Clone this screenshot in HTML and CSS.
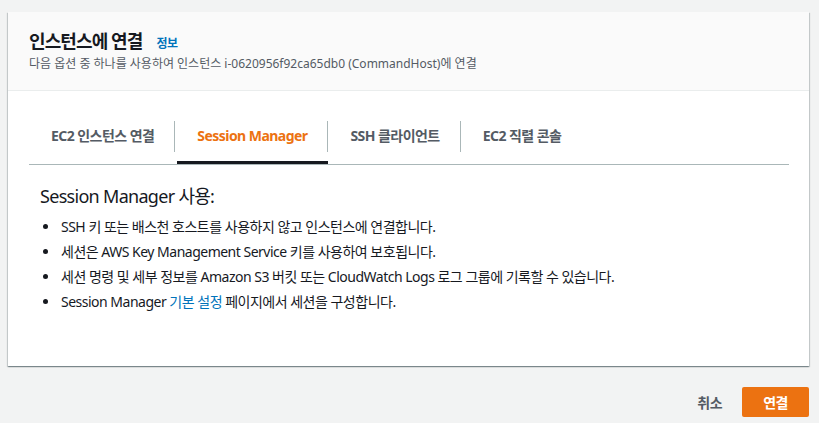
FILE: index.html
```html
<!DOCTYPE html>
<html lang="ko">
<head>
<meta charset="utf-8">
<title>인스턴스에 연결</title>
<link rel="stylesheet" href="styles.css">
</head>
<body>
<div class="page">
  <section class="card">
    <header class="card-header">
      <div class="title-row">
        <h1 class="title">인스턴스에 연결</h1>
        <a class="info-link" href="#">정보</a>
      </div>
      <p class="subtitle">다음 옵션 중 하나를 사용하여 인스턴스 i-0620956f92ca65db0 (CommandHost)에 연결</p>
    </header>
    <div class="card-body">
      <nav class="tabs">
        <div class="tab"><span class="tab-label">EC2 인스턴스 연결</span></div>
        <div class="tab active"><span class="tab-label">Session Manager</span></div>
        <div class="tab"><span class="tab-label">SSH 클라이언트</span></div>
        <div class="tab last"><span class="tab-label">EC2 직렬 콘솔</span></div>
      </nav>
      <div class="tab-content">
        <h2 class="content-title">Session Manager 사용:</h2>
        <ul class="bullets">
          <li>SSH 키 또는 배스천 호스트를 사용하지 않고 인스턴스에 연결합니다.</li>
          <li>세션은 AWS Key Management Service 키를 사용하여 보호됩니다.</li>
          <li>세션 명령 및 세부 정보를 Amazon S3 버킷 또는 CloudWatch Logs 로그 그룹에 기록할 수 있습니다.</li>
          <li>Session Manager <a class="link" href="#">기본 설정</a> 페이지에서 세션을 구성합니다.</li>
        </ul>
      </div>
    </div>
  </section>
  <footer class="actions">
    <button class="btn-link">취소</button>
    <button class="btn-primary">연결</button>
  </footer>
</div>
</body>
</html>
```
FILE: styles.css
```css
* { box-sizing: border-box; }
html, body { margin: 0; padding: 0; }
body {
  background: #f2f3f3;
  font-family: "Noto Sans", "Noto Sans CJK KR", sans-serif;
  color: #16191f;
  letter-spacing: -0.55px;
  width: 819px;
  height: 423px;
  overflow: hidden;
}
.page {
  padding: 12px 10px 0 8px;
}
.card {
  background: #fff;
  box-shadow: 0 1px 1px 0 rgba(0, 28, 36, 0.3), 1px 1px 1px 0 rgba(0, 28, 36, 0.15), -1px 1px 1px 0 rgba(0, 28, 36, 0.15);
}
.card-header {
  background: #fafafa;
  border-bottom: 1px solid #eaeded;
  padding: 17px 20px 0 21px;
  height: 79px;
}
.title-row {
  display: flex;
  align-items: baseline;
  gap: 14px;
}
.title {
  margin: 0;
  font-size: 18px;
  line-height: 24px;
  font-weight: 700;
  letter-spacing: -0.9px;
  color: #16191f;
}
.info-link {
  font-size: 12px;
  font-weight: 700;
  color: #0073bb;
  text-decoration: none;
}
.subtitle {
  margin: 3px 0 0;
  font-size: 12px;
  line-height: 16px;
  letter-spacing: 0;
  color: #545b64;
}
.card-body {
  padding: 20px 20px 0 21px;
  height: 275px;
}
.tabs {
  display: flex;
  border-bottom: 1px solid #aab7b8;
  height: 54px;
}
.tab {
  position: relative;
  display: flex;
  align-items: center;
  padding: 0 21px 0 22px;
  font-size: 14px;
  font-weight: 700;
  color: #545b64;
}
.tab::after {
  content: "";
  position: absolute;
  right: 0;
  top: 10px;
  bottom: 12px;
  width: 1px;
  background: #aab7b8;
}
.tab.last::after { display: none; }
.tab.active {
  color: #ec7211;
}
.tab.active::before {
  content: "";
  position: absolute;
  left: 2px;
  right: 0;
  bottom: 0;
  height: 3px;
  background: #16191f;
}
.tab-label {
  display: block;
  line-height: 20px;
  margin-top: -4px;
}
.tab-content {
  padding: 19px 11px 0 11px;
}
.content-title {
  margin: 0 0 6px;
  font-size: 18px;
  line-height: 24px;
  font-weight: 400;
  letter-spacing: -0.7px;
  color: #16191f;
}
.bullets {
  margin: 0;
  padding: 0 0 0 20px;
  font-size: 14px;
  line-height: 25px;
  letter-spacing: -0.5px;
  color: #16191f;
}
.bullets li { padding-left: 1px; }
.link {
  color: #0073bb;
  text-decoration: none;
}
.actions {
  display: flex;
  justify-content: flex-end;
  align-items: center;
  gap: 20px;
  padding-top: 21px;
}
.btn-link {
  border: 0;
  background: none;
  font-family: inherit;
  font-size: 14px;
  font-weight: 700;
  letter-spacing: -0.55px;
  color: #545b64;
  padding: 0;
}
.btn-primary {
  border: 0;
  border-radius: 2px;
  background: #ec7211;
  color: #fff;
  font-family: inherit;
  font-size: 14px;
  font-weight: 700;
  letter-spacing: -0.55px;
  width: 67px;
  height: 30px;
  padding: 0;
}
```
